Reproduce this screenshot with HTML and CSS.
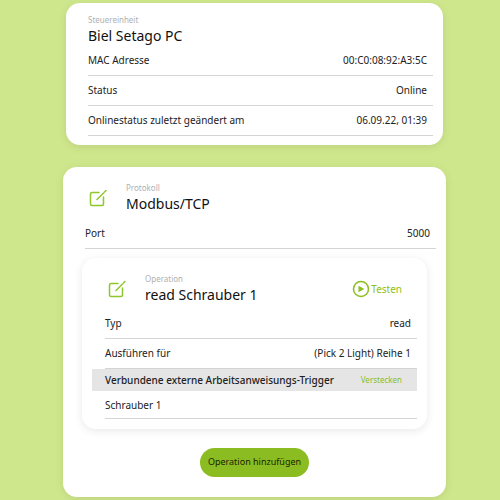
FILE: index.html
```html
<!DOCTYPE html>
<html lang="de">
<head>
<meta charset="utf-8">
<meta name="viewport" content="width=device-width, initial-scale=1">
<title>Biel Setago PC</title>
<link rel="stylesheet" href="styles.css">
</head>
<body>
<main class="page">
  <section class="card unit">
    <header class="heading">
      <p class="kind">Steuereinheit</p>
      <h1 class="title">Biel Setago PC</h1>
    </header>
    <dl class="rows">
      <div class="row"><dt>MAC Adresse</dt><dd>00:C0:08:92:A3:5C</dd></div>
      <div class="row"><dt>Status</dt><dd>Online</dd></div>
      <div class="row"><dt>Onlinestatus zuletzt geändert am</dt><dd>06.09.22, 01:39</dd></div>
    </dl>
  </section>

  <section class="card protocol">
    <header class="bar">
      <button class="edit" type="button" aria-label="Protokoll bearbeiten">
        <svg class="icon" viewBox="0 0 18 18" aria-hidden="true"><path d="M10 3.500H3A1.500 1.500 0 0 0 1.500 5v10A1.500 1.500 0 0 0 3 16.500h10a1.500 1.500 0 0 0 1.500-1.500V8M8 10.500 14.500 4M15.500 3 17 1.500"/></svg>
      </button>
      <div class="heading">
        <p class="kind">Protokoll</p>
        <h2 class="title">Modbus/TCP</h2>
      </div>
    </header>
    <dl class="rows port">
      <div class="row"><dt>Port</dt><dd>5000</dd></div>
    </dl>

    <article class="card operation">
      <header class="bar">
        <button class="edit" type="button" aria-label="Operation bearbeiten">
          <svg class="icon" viewBox="0 0 18 18" aria-hidden="true"><path d="M10 3.500H3A1.500 1.500 0 0 0 1.500 5v10A1.500 1.500 0 0 0 3 16.500h10a1.500 1.500 0 0 0 1.500-1.500V8M8 10.500 14.500 4M15.500 3 17 1.500"/></svg>
        </button>
        <div class="heading">
          <p class="kind">Operation</p>
          <h3 class="title">read Schrauber 1</h3>
        </div>
        <button class="test" type="button">
          <svg class="play" viewBox="0 0 18 18" aria-hidden="true"><circle cx="9" cy="9" r="7.500"/><path d="M6.500 5.800v6.400L12.300 9z"/></svg>
          <span>Testen</span>
        </button>
      </header>
      <dl class="rows">
        <div class="row"><dt>Typ</dt><dd>read</dd></div>
        <div class="row"><dt>Ausführen für</dt><dd>(Pick 2 Light) Reihe 1</dd></div>
      </dl>
      <div class="trigger">
        <h4 class="trigger-title">Verbundene externe Arbeitsanweisungs-Trigger</h4>
        <button class="hide" type="button">Verstecken</button>
      </div>
      <ul class="rows">
        <li class="row last">Schrauber 1</li>
      </ul>
    </article>

    <button class="add" type="button">Operation hinzufügen</button>
  </section>
</main>
</body>
</html>
```
FILE: styles.css
```css
* {
  box-sizing: border-box;
}

body {
  margin: 0;
  background: #cfe78c;
  color: #222;
  font-family: "Noto Sans", "Open Sans", sans-serif;
  font-size: 10px;
  line-height: 16px;
}

h1, h2, h3, h4, p, dl, dd, ul {
  margin: 0;
  padding: 0;
}

ul {
  list-style: none;
}

button {
  padding: 0;
  border: 0;
  background: none;
  color: #8bbf22;
  font: inherit;
  cursor: pointer;
}

.page {
  display: flex;
  flex-direction: column;
  gap: 22px;
  padding: 3px 54px 3px 63px;
}

.card {
  border-radius: 14px;
  background: #fff;
  box-shadow: 0 2px 10px rgba(0, 0, 0, 0.09);
}

.unit {
  margin: 0 3px;
  padding: 11px 10px 9px 22px;
}

.protocol {
  display: flex;
  flex-direction: column;
  padding: 15px 19px 20px;
}

.operation {
  margin-top: 9px;
  padding: 15px 10px 10px;
}

.bar {
  display: flex;
  align-items: center;
}

.heading {
  flex: 1;
}

.kind {
  color: #b0b0b0;
  font-size: 8px;
  line-height: 12px;
}

.title {
  color: #111;
  font-size: 14px;
  font-weight: 400;
  line-height: 20px;
}

.edit {
  width: 18px;
  height: 18px;
  margin-right: 19px;
}

.protocol > .bar {
  padding-left: 7px;
}

.operation > .bar {
  padding: 0 15px 0 16px;
}

.icon {
  display: block;
  width: 18px;
  height: 18px;
  fill: none;
  stroke: #8fc62b;
  stroke-width: 1.5;
  stroke-linecap: round;
}

.row {
  display: flex;
  justify-content: space-between;
  padding: 6px 6px 7px 0;
  border-bottom: 1px solid #d4d4d4;
}

.unit .rows {
  margin-top: 1px;
}

.unit .row:first-child {
  padding-top: 5px;
}

.port {
  margin: 5px -9px 0 3px;
}

.operation .rows {
  margin-left: 13px;
}

.operation dl {
  margin-top: 4px;
}

.test {
  display: flex;
  align-items: center;
  gap: 1px;
}

.play {
  width: 18px;
  height: 18px;
  fill: none;
  stroke: #8bbf22;
  stroke-width: 1.5;
}

.play path {
  fill: #8bbf22;
  stroke: none;
}

.trigger {
  display: flex;
  align-items: center;
  justify-content: space-between;
  padding: 3px 15px 3px 13px;
  background: #e5e5e5;
}

.trigger-title {
  font-size: 10px;
  font-weight: 500;
}

.hide {
  font-size: 8px;
}

.row.last {
  padding-bottom: 5px;
}

.add {
  align-self: center;
  margin-top: 19px;
  padding: 6px 8px 7px;
  border-radius: 15px;
  background: #8bbd22;
  color: #1b2400;
  font-size: 9px;
}
```
